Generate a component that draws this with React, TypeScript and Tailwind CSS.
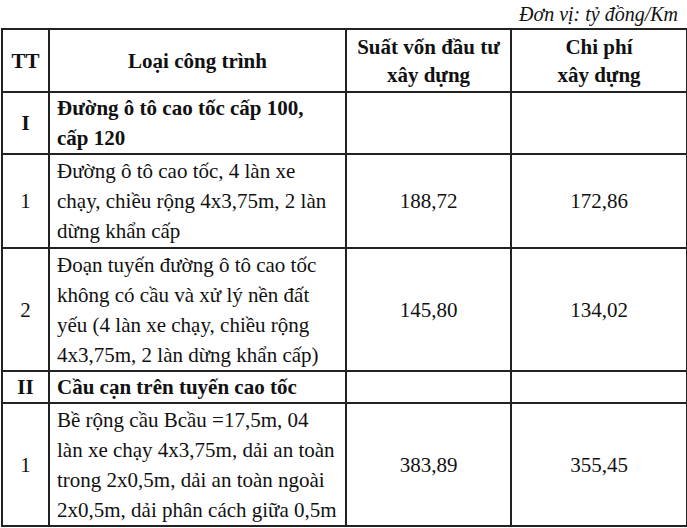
const rows = [
  { tt: "I", name: ["Đường ô tô cao tốc cấp 100,", "cấp 120"], bold: true, a: "", b: "", h: "h-[61px]" },
  {
    tt: "1",
    name: ["Đường ô tô cao tốc, 4 làn xe", "chạy, chiều rộng 4x3,75m, 2 làn", "dừng khẩn cấp"],
    a: "188,72",
    b: "172,86",
    h: "h-[94px]",
  },
  {
    tt: "2",
    name: [
      "Đoạn tuyến đường ô tô cao tốc",
      "không có cầu và xử lý nền đất",
      "yếu (4 làn xe chạy, chiều rộng",
      "4x3,75m, 2 làn dừng khẩn cấp)",
    ],
    a: "145,80",
    b: "134,02",
    h: "h-[123px]",
  },
  { tt: "II", name: ["Cầu cạn trên tuyến cao tốc"], bold: true, a: "", b: "", h: "h-[32px]" },
  {
    tt: "1",
    name: [
      "Bề rộng cầu Bcầu =17,5m, 04",
      "làn xe chạy 4x3,75m, dải an toàn",
      "trong 2x0,5m, dải an toàn ngoài",
      "2x0,5m, dải phân cách giữa 0,5m",
    ],
    a: "383,89",
    b: "355,45",
    h: "h-[123px]",
  },
];

export default function App() {
  return (
    <div className="w-[687px] h-[528px] bg-white text-[#111] font-['Liberation_Serif','Times_New_Roman',serif] overflow-hidden">
      <div className="h-[28px] pr-[9px] text-right italic text-[20px] leading-[28px]">Đơn vị: tỷ đồng/Km</div>
      <table className="ml-[1px] w-[685px] table-fixed border-collapse text-[21px] leading-[30px]">
        <colgroup>
          <col className="w-[47px]" />
          <col className="w-[297px]" />
          <col className="w-[165px]" />
          <col className="w-[176px]" />
        </colgroup>
        <thead>
          <tr className="h-[63px] font-bold">
            <th className="border-2 border-[#222] text-center align-middle">TT</th>
            <th className="border-2 border-[#222] text-center align-middle">Loại công trình</th>
            <th className="border-2 border-[#222] text-center align-middle leading-[28px]">
              Suất vốn đầu tư
              <br />
              xây dựng
            </th>
            <th className="border-2 border-[#222] text-center align-middle leading-[28px]">
              Chi phí
              <br />
              xây dựng
            </th>
          </tr>
        </thead>
        <tbody>
          {rows.map((r, i) => (
            <tr key={i} className={r.h}>
              <td className={`border-2 border-[#222] text-center align-middle ${r.bold ? "font-bold" : ""}`}>{r.tt}</td>
              <td className={`border-2 border-[#222] pl-[7px] pr-0 align-middle whitespace-nowrap ${r.bold ? "font-bold" : ""}`}>
                {r.name.map((l, j) => (
                  <div key={j}>{l}</div>
                ))}
              </td>
              <td className="border-2 border-[#222] text-center align-middle">{r.a}</td>
              <td className="border-2 border-[#222] text-center align-middle">{r.b}</td>
            </tr>
          ))}
        </tbody>
      </table>
    </div>
  );
}
